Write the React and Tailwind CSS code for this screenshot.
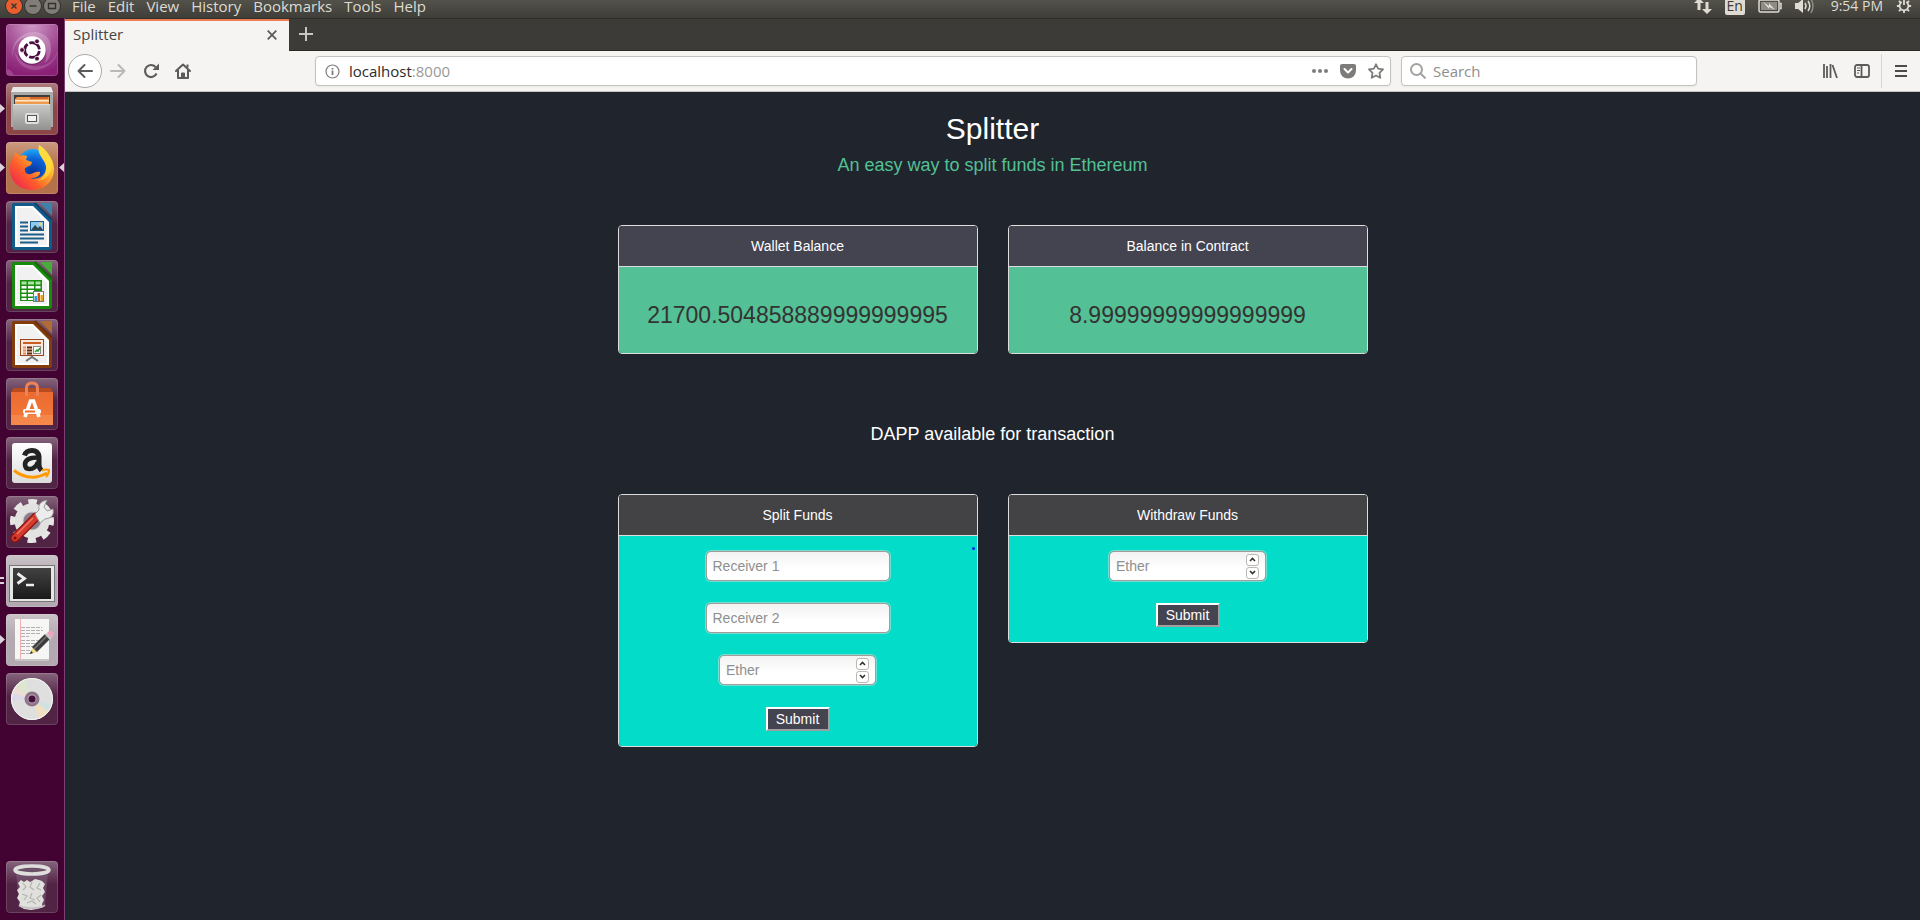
import React from "react";

const TILE_STYLES = {
  dash: "bg-[#8f2579]",
  files: "bg-[#8d4647]",
  firefox: "bg-[#b5714a]",
  dark: "bg-[#512344]",
  grey: "bg-[#b3a9b0]",
};

function DashIcon() {
  return (
    <>
      <defs>
        <radialGradient id="dashGlow" cx="50%" cy="0%" r="100%">
          <stop offset="0" stopColor="#cf9ac6" />
          <stop offset="0.6" stopColor="#a04790" />
          <stop offset="1" stopColor="#8a1f76" />
        </radialGradient>
      </defs>
      <rect x="1" y="1" width="50" height="50" rx="3" fill="url(#dashGlow)" />
      <path d="M7 34C4 20 14 8 28 8c10 0 17 6 17 16 0 6-2 12-6 15 4-12 1-24-12-26C15 11 6 20 7 34z" fill="#fff" opacity=".22" />
      <path d="M1 46C3 44 5 46 8 51H1zM51 30C46 44 30 50 18 43 12 39 9 33 9 28c4 10 14 16 25 14 8-1 14-6 17-14z" fill="#fff" opacity=".16" />
      <circle cx="26" cy="27" r="14" fill="#3b0f33" opacity=".35" />
      <circle cx="26" cy="26" r="13.7" fill="#fff" />
      <circle cx="26" cy="26" r="7.4" fill="none" stroke="#4a0d3f" strokeWidth="2.8" strokeDasharray="13.5 2" strokeDashoffset="-1" />
      <g fill="#4a0d3f" stroke="#fff" strokeWidth=".8">
        <circle cx="16" cy="26" r="2.4" />
        <circle cx="31" cy="17.3" r="2.4" />
        <circle cx="31" cy="34.7" r="2.4" />
      </g>
    </>
  );
}

function FilesIcon() {
  return (
    <>
      <defs>
        <linearGradient id="cabinet" x1="0" y1="0" x2="0" y2="1">
          <stop offset="0" stopColor="#c9c9c7" />
          <stop offset="1" stopColor="#929290" />
        </linearGradient>
      </defs>
      <path d="M5 9l2-5h38l2 5v35H5z" fill="#a9a9a7" />
      <path d="M5 9l2-5h38l2 5z" fill="#e9e9e7" />
      <rect x="8" y="12" width="36" height="12" fill="#3d3d3b" />
      <path d="M9 21v-5l2-2h32v8z" fill="#ef9a4c" />
      <path d="M24 14h18v2H24z" fill="#d6642d" />
      <path d="M9 17h34v1.5H9z" fill="#fbe7cd" />
      <path d="M7 21h37l1 26H7z" fill="url(#cabinet)" />
      <path d="M7 21h37v1H7z" fill="#ddd" />
      <rect x="19" y="30" width="14" height="11" rx="2" fill="#dededc" />
      <rect x="21.5" y="32.5" width="9" height="6" fill="#f2f2f2" stroke="#555" />
    </>
  );
}

function FirefoxIcon() {
  return (
    <>
      <defs>
        <linearGradient id="foxBody" x1="1" y1="0" x2="0" y2="1">
          <stop offset="0" stopColor="#fff250" />
          <stop offset="0.35" stopColor="#ffb62b" />
          <stop offset="0.65" stopColor="#ff5b2b" />
          <stop offset="1" stopColor="#e8155f" />
        </linearGradient>
        <radialGradient id="foxGlobe" cx="50%" cy="80%" r="80%">
          <stop offset="0" stopColor="#0a2f95" />
          <stop offset="0.6" stopColor="#0b63d8" />
          <stop offset="1" stopColor="#21a8f5" />
        </radialGradient>
      </defs>
      <circle cx="27" cy="22" r="15" fill="url(#foxGlobe)" />
      <path
        d="M33 3c5 3 8 7 9 10 4 3 6 9 6 14 0 12-9 21-22 21S4 39 4 27c0-5 1-9 4-12l1-5 5 4c2-1 5-1 7 0l-1 4 6 2-1 3-6 3c-1 4 2 7 6 6 3-1 5-3 9-2 1 4-6 7-11 6 9 3 18-2 17-12-1-7-9-10-7-21z"
        fill="url(#foxBody)"
      />
      <path d="M33 3c-3 9 6 14 7 21 1 8-4 13-9 15 9-1 15-8 15-16 0-10-7-16-13-20z" fill="#ffe03f" opacity=".75" />
    </>
  );
}

function OfficePage({ edge, corner, fold, children }) {
  return (
    <>
      <path d="M7 2h22l17 17v27q0 3-3 3H9q-3 0-3-3V3z" fill={edge} />
      <path d="M34 2h12v13z" fill={corner} />
      <path d="M9 5h18l16 16v25H9z" fill="#fff" />
      <path d="M11 7h15l15 16v21H11z" fill="#f1f1f1" />
      <path d="M29 2l17 17" stroke={fold} strokeWidth="2" />
      {children}
    </>
  );
}

function WriterIcon() {
  return (
    <OfficePage edge="#105a8c" corner="#3d82ab" fold="#0b466f">
      <path d="M14 21.5h8M14 25.5h8M14 29.5h8M14 33.5h24M14 37.5h24M14 41.5h18" stroke="#1d5d89" strokeWidth="2" />
      <rect x="24.5" y="20.5" width="13" height="9" fill="#8ccaf0" stroke="#1d5d89" />
      <path d="M25 29l4-5 3 3 2-2 3 4z" fill="#30464f" />
      <circle cx="34.5" cy="23" r="1.5" fill="#ffd65a" />
    </OfficePage>
  );
}

function CalcIcon() {
  return (
    <OfficePage edge="#188a0c" corner="#46ad3b" fold="#126b09">
      <rect x="14" y="20" width="22" height="21" fill="#1b8d10" />
      <path d="M15.5 21.5h5v3h-5zm6.5 0h6v3h-6zm7.5 0h5v3h-5z" fill="#a8e59f" />
      <path d="M15.5 26h5v2.5h-5zm6.5 0h6v2.5h-6zm7.5 0h5v2.5h-5zM15.5 30h5v2.5h-5zm6.5 0h6v2.5h-6zM15.5 34h5v2.5h-5zm6.5 0h6v2.5h-6zM15.5 38h5v2h-5zm6.5 0h6v2h-6z" fill="#fff" />
      <rect x="27.5" y="31.5" width="10" height="10" fill="#fff" stroke="#777" />
      <path d="M28.5 36h2.5v5h-2.5z" fill="#299ed8" />
      <path d="M31.5 33H34v8h-2.5z" fill="#cf5a18" />
      <path d="M34.5 35H37v6h-2.5z" fill="#e8a21c" />
    </OfficePage>
  );
}

function ImpressIcon() {
  return (
    <OfficePage edge="#853c0d" corner="#b06b37" fold="#6e3009">
      <rect x="14.5" y="20.5" width="23" height="16" fill="#fae8dc" stroke="#93471b" />
      <path d="M17 24h18" stroke="#c95f24" strokeWidth="2" />
      <path d="M17 28.5h3M17 31.5h3M17 34.5h3" stroke="#e88a58" strokeWidth="2" />
      <path d="M21 28.5h5M21 31.5h5M21 34.5h5" stroke="#5d270a" strokeWidth="2" />
      <rect x="27.5" y="27.5" width="7" height="7" fill="#fff" stroke="#888" />
      <path d="M29 33l2-2 1 1 2-3" stroke="#25a02a" strokeWidth="1.5" fill="none" />
      <path d="M26 37v2m-6 3l6-4 6 4" stroke="#777" strokeWidth="2" fill="none" />
    </OfficePage>
  );
}

function SoftwareIcon() {
  return (
    <>
      <defs>
        <linearGradient id="bag" x1="0" y1="0" x2="0" y2="1">
          <stop offset="0" stopColor="#ec6a30" />
          <stop offset="1" stopColor="#f27b3a" />
        </linearGradient>
      </defs>
      <path d="M7 10h38l2 5H5z" fill="#b64c20" />
      <path d="M5 14h42v33H5z" fill="url(#bag)" />
      <path d="M5 37h42v10H5z" fill="#f9955c" opacity=".5" />
      <path d="M20.500 18v-8q0-5 5.500-5t5.500 5v8" fill="none" stroke="#ee8257" strokeWidth="3" />
      <path d="M19 39l5.5-16h3L33 39" fill="none" stroke="#fff" strokeWidth="3.6" />
      <rect x="17" y="31" width="18" height="5" rx="2" fill="#fff" />
      <path d="M19 33.500h10" stroke="#ee6a2c" strokeWidth="2" />
    </>
  );
}

function AmazonIcon() {
  return (
    <>
      <defs>
        <linearGradient id="amz" x1="0" y1="0" x2="0" y2="1">
          <stop offset="0" stopColor="#fff" />
          <stop offset="1" stopColor="#dcdcdc" />
        </linearGradient>
      </defs>
      <rect x="6" y="6" width="40" height="40" rx="3" fill="url(#amz)" />
      <path d="M18.500 18.500q1.500-5 7.500-5t7 6v8.500q0 3 2.500 5.500" fill="none" stroke="#222" strokeWidth="5" />
      <path d="M32 20.500q-13 0-13 7 0 4.500 4.500 4.500 6 0 8.500-7" fill="none" stroke="#222" strokeWidth="4.600" />
      <path d="M8 33.500q16 12 33 2.500" fill="none" stroke="#f90" strokeWidth="3" />
      <path d="M36 33.500q4-1.500 7-.500 0 4-3 7" fill="none" stroke="#f90" strokeWidth="2" />
    </>
  );
}

function SettingsIcon() {
  return (
    <>
      <circle cx="26" cy="25" r="18" fill="none" stroke="#e6e6e4" strokeWidth="8" strokeDasharray="8 6.137" strokeDashoffset="4" />
      <circle cx="26" cy="25" r="13" fill="none" stroke="#e2e2e0" strokeWidth="9" />
      <circle cx="26" cy="25" r="9" fill="#8d7c89" stroke="#c7c7c5" />
      <path d="M9 42L30 21" stroke="#8e160f" strokeWidth="9" strokeLinecap="round" />
      <path d="M9 42L30 21" stroke="#d63a2c" strokeWidth="6.5" strokeLinecap="round" />
      <path d="M11 38L27 22" stroke="#f07a6c" strokeWidth="1.2" />
      <path d="M29 18l4-4q-2-8 8-10l-3 7 3 4 6-2q2 9-8 10l-5 4z" fill="#ececec" stroke="#999" />
      <circle cx="9" cy="42" r="1.5" fill="#7b0f0a" />
    </>
  );
}

function TerminalIcon() {
  return (
    <>
      <defs>
        <linearGradient id="term" x1="0" y1="0" x2="0" y2="1">
          <stop offset="0" stopColor="#424242" />
          <stop offset="1" stopColor="#1a1a1a" />
        </linearGradient>
      </defs>
      <rect x="3.5" y="10.5" width="45" height="36" fill="#e5e5e3" stroke="#777" />
      <rect x="7" y="13" width="38" height="31" fill="url(#term)" />
      <path d="M11.500 18.500l7 5-7 5" fill="none" stroke="#eee" strokeWidth="2.8" />
      <path d="M20 30h8" stroke="#eee" strokeWidth="2.400" />
    </>
  );
}

function EditorIcon() {
  return (
    <>
      <path d="M9 6h34v41H9z" fill="#c7c6c4" />
      <path d="M9 5h34v40H9z" fill="#f6f6f4" />
      <path d="M14.500 5v40" stroke="#f3b0b0" />
      <path d="M15 13.500h21M15 16.500h22M15 19.500h20M15 22.500h8M15 26.500h21M15 29.500h15M15 32.500h17M15 36.500h14M15 39.500h10" stroke="#b0b0b0" strokeDasharray="4 1" />
      <path d="M24 40l3-7 5 5z" fill="#f0d98a" />
      <path d="M24 40l1-3 2 2z" fill="#222" />
      <path d="M26 33l13-13 5 5-13 13z" fill="#3c3c3c" />
      <path d="M28 35l12-12" stroke="#777" strokeWidth="1.5" />
      <path d="M39 21l2-2 5 5-2 2z" fill="#c8c8c8" />
      <path d="M41 19l2-2q2-1 4 1t0 4l-1 2z" fill="#f0a4c3" />
    </>
  );
}

function DiscIcon() {
  return (
    <>
      <circle cx="26" cy="26" r="21" fill="#dfdfdf" />
      <path d="M26 26L10 13q4-5 9-7z" fill="#dce6d0" />
      <path d="M26 26L6 20q1-4 4-7z" fill="#eeddd4" />
      <path d="M26 26l20 6q-1 4-4 7z" fill="#cfe2e0" />
      <path d="M26 26l16 13q-4 5-9 7z" fill="#f0dfc0" />
      <path d="M26 26L5 28q0-5 1-8z" fill="#dcd9ea" />
      <circle cx="26" cy="26" r="20.5" fill="none" stroke="#f5f5f5" />
      <circle cx="26" cy="26" r="6" fill="#b9a3b5" stroke="#8f748a" strokeWidth="3" />
      <circle cx="26" cy="26" r="3.5" fill="#42123a" />
    </>
  );
}

function TrashIcon() {
  return (
    <>
      <path d="M10 11l3 33q1 4 13 4t13-4l3-33z" fill="#7d6078" opacity=".55" />
      <path
        d="M12 22l3-3 3 2 3-2 3 2 2-1 3-2 4 1 3 1 3 3-2 4 2 4-3 4 2 4-2 4 1 3-6 2-6 1-7-1-5-3 1-4-3-4 2-4-2-4 3-3z"
        fill="#e0e0dd"
      />
      <path d="M17 22l3 4-3 3M26 21l-2 5 4 3M34 22l-3 5 4 2M16 33l5 2-3 4M26 32l-2 5 5 2M35 34l-4 3 3 4M21 42l5-2 4 3" fill="none" stroke="#b4b4b0" strokeWidth="1.2" />
      <path d="M13 44q2 3 13 3t13-3" fill="none" stroke="#c5bcc3" strokeWidth="1.500" />
      <ellipse cx="26" cy="9" rx="17" ry="4" fill="#6b5066" stroke="#dededc" strokeWidth="3.5" />
    </>
  );
}

const LAUNCHER = [
  { name: "Search your computer", tile: "dash", Icon: DashIcon },
  { name: "Files", tile: "files", Icon: FilesIcon, running: 1 },
  { name: "Firefox", tile: "firefox", Icon: FirefoxIcon, running: 1, focused: true },
  { name: "LibreOffice Writer", tile: "dark", Icon: WriterIcon },
  { name: "LibreOffice Calc", tile: "dark", Icon: CalcIcon },
  { name: "LibreOffice Impress", tile: "dark", Icon: ImpressIcon },
  { name: "Ubuntu Software", tile: "dark", Icon: SoftwareIcon },
  { name: "Amazon", tile: "dark", Icon: AmazonIcon },
  { name: "System Settings", tile: "dark", Icon: SettingsIcon },
  { name: "Terminal", tile: "grey", Icon: TerminalIcon, running: 2 },
  { name: "Text Editor", tile: "grey", Icon: EditorIcon, running: 1 },
  { name: "Disc", tile: "dark", Icon: DiscIcon },
];

function LauncherTile({ name, tile, Icon, running, focused }) {
  return (
    <button type="button" aria-label={name} className="relative flex w-full justify-center">
      {running === 1 && (
        <svg className="absolute top-[21px] left-0 h-[9px] w-[5px]" viewBox="0 0 5 9">
          <path d="M0 0l5 4.5L0 9z" fill="#dcd3da" />
        </svg>
      )}
      {running === 2 && (
        <svg className="absolute top-[21px] left-0 h-[9px] w-[5px]" viewBox="0 0 5 9">
          <path d="M0 1h4v2H0zM0 6h4v2H0z" fill="#dcd3da" />
        </svg>
      )}
      {focused && (
        <svg className="absolute top-[21px] right-0 h-[9px] w-[5px]" viewBox="0 0 5 9">
          <path d="M5 0L0 4.5 5 9z" fill="#dcd3da" />
        </svg>
      )}
      <span className={"block size-[52px] overflow-hidden rounded-sm bg-linear-to-b from-white/30 to-transparent to-45% shadow-[inset_0_0_0_1px_rgba(255,255,255,0.15)] " + TILE_STYLES[tile]}>
        <svg className="size-[52px]" viewBox="0 0 52 52">
          <Icon />
        </svg>
      </span>
    </button>
  );
}

function Launcher() {
  return (
    <nav aria-label="Launcher" className="flex w-[65px] shrink-0 flex-col justify-between border-r border-[#7b4272] bg-[#420333] pt-[6px] pb-[7px]">
      <div className="flex flex-col gap-[7px]">
        {LAUNCHER.map((item) => (
          <LauncherTile key={item.name} {...item} />
        ))}
      </div>
      <LauncherTile name="Trash" tile="dark" Icon={TrashIcon} />
    </nav>
  );
}

function WindowButton({ label, className, children }) {
  return (
    <button type="button" aria-label={label} className={"flex size-4 items-center justify-center rounded-full shadow-[0_0_0_1px_#33322e] " + className}>
      <svg className="size-4" viewBox="0 0 16 16" fill="none" stroke="#33322e" strokeWidth="1.4">
        {children}
      </svg>
    </button>
  );
}

function MenuBar() {
  return (
    <header className="flex h-[18px] shrink-0 items-start justify-between bg-linear-to-b from-[#53524a] to-[#3e3d38] pr-2 pl-[6px]">
      <div className="flex h-3 items-center gap-3">
        <div className="flex gap-[3px]">
          <WindowButton label="Close" className="bg-[#e95e2e]">
            <path d="M5.5 5.5l5 5m0-5l-5 5" />
          </WindowButton>
          <WindowButton label="Minimize" className="bg-[#7f7d76]">
            <path d="M4.5 8h7" />
          </WindowButton>
          <WindowButton label="Restore" className="bg-[#7f7d76]">
            <path d="M4.5 5.5h7v5h-7z" />
          </WindowButton>
        </div>
        <div className="flex gap-3 text-[15px] leading-3 text-[#dfdbd2]">
          {["File", "Edit", "View", "History", "Bookmarks", "Tools", "Help"].map((m) => (
            <button key={m} type="button">{m}</button>
          ))}
        </div>
      </div>
      <div className="flex h-3 items-center gap-[13px] text-[14px] leading-3 text-[#dfdbd2]">
        <svg className="h-5 w-[18px]" viewBox="0 0 18 20" fill="#dfdbd2">
          <path d="M0 7l5-5 5 5H6.5v7h-3V7zM8 13l5 5 5-5h-3.500V6h-3v7z" />
        </svg>
        <span className="flex h-[18px] w-5 items-center justify-center rounded-xs bg-[#dfdbd2] text-[14px] text-[#3c3b37]">En</span>
        <svg className="h-[14px] w-6" viewBox="0 0 24 14" fill="none" stroke="#dfdbd2" strokeWidth="1.5">
          <rect x="1" y="1" width="20" height="12" rx="1.5" />
          <path d="M22 4.5h1v5h-1" />
          <path d="M3 3h16v8H3z" fill="#8d8b84" stroke="none" />
          <path d="M5 3l6 4V4l6 7-6-3v2z" fill="#dfdbd2" stroke="none" />
        </svg>
        <svg className="h-4 w-5" viewBox="0 0 20 16" fill="none" stroke="#dfdbd2" strokeWidth="1.5">
          <path d="M0 5h3l5-4v14l-5-4H0z" fill="#dfdbd2" stroke="none" />
          <path d="M10 5q2 3 0 6M13 3q3.5 5 0 10" />
          <path d="M16 1q4 7 0 14" stroke="#8d8b84" />
        </svg>
        <span className="ml-[3px]">9:54 PM</span>
        <svg className="size-4" viewBox="0 0 18 18" fill="none" stroke="#dfdbd2">
          <path d="M6.5 4.5a5 5 0 1 0 5 0" strokeWidth="2" />
          <path d="M9 1v7" strokeWidth="2" />
          <path d="M1 9h2.5m11 0H17M3.3 14.7l2-2m7.4 0l2 2M9 14.5V17M3.3 3.3l2 2m7.4 0l2-2" strokeWidth="2" />
        </svg>
      </div>
    </header>
  );
}

function TabStrip() {
  return (
    <div className="flex h-[33px] shrink-0 bg-[#3c3b37] pt-px shadow-[inset_0_-1px_0_#2a2926,inset_0_1px_0_#2f2e2b]">
      <div className="flex w-56 items-center justify-between border-t-2 border-[#ef7d52] bg-[#f5f4f2] pr-3 pb-[3px] pl-2 text-[15px] text-[#45443f]">
        <span>Splitter</span>
        <button type="button" aria-label="Close tab">
          <svg className="size-[10px]" viewBox="0 0 10 10" fill="none" stroke="#5c5b58" strokeWidth="1.8">
            <path d="M.7.7l8.6 8.6m0-8.6L.7 9.3" />
          </svg>
        </button>
      </div>
      <button type="button" aria-label="New tab" className="ml-[10px] pb-[2px]">
        <svg className="size-[14px]" viewBox="0 0 14 14" stroke="#c8c7c3" strokeWidth="2">
          <path d="M7 0v14M0 7h14" />
        </svg>
      </button>
    </div>
  );
}

function NavBar() {
  return (
    <div className="flex h-[41px] shrink-0 items-center border-b border-[#c4c3c0] bg-[#f5f4f2] pr-[11px] pl-[3px] text-[15px]">
      <div className="flex w-[247px] items-center">
        <button type="button" aria-label="Back" className="flex size-[34px] items-center justify-center rounded-full border border-[#a9a8a5] bg-white">
          <svg className="size-4" viewBox="0 0 16 16" fill="none" stroke="#5c5b59" strokeWidth="2" strokeLinecap="round" strokeLinejoin="round">
            <path d="M15 8H1.5M7.5 2l-6 6 6 6" />
          </svg>
        </button>
        <button type="button" aria-label="Forward" className="ml-2">
          <svg className="size-4" viewBox="0 0 16 16" fill="none" stroke="#b9b8b6" strokeWidth="2" strokeLinecap="round" strokeLinejoin="round">
            <path d="M1 8h13.5M8.5 2l6 6-6 6" />
          </svg>
        </button>
        <button type="button" aria-label="Reload" className="ml-[17px]">
          <svg className="size-4" viewBox="0 0 16 16" fill="none" stroke="#5c5b59" strokeWidth="2.2">
            <path d="M13.5 10.5A6 6 0 1 1 12.5 4" />
            <path d="M16 .5V7H9.5z" fill="#5c5b59" stroke="none" />
          </svg>
        </button>
        <button type="button" aria-label="Home" className="ml-4">
          <svg className="size-4" viewBox="0 0 16 16" fill="none" stroke="#5c5b59" strokeWidth="2" strokeLinejoin="round">
            <path d="M1 8l7-6.5L15 8" strokeLinecap="round" />
            <path d="M3 7v8h10V7" />
            <path d="M6.5 15v-5h3v5z" fill="#5c5b59" strokeWidth="1" />
            <path d="M12.5 1.5v3" />
          </svg>
        </button>
      </div>
      <div className="flex h-[30px] min-w-0 flex-1 items-center rounded-sm border border-[#c3c2bf] bg-white pr-[6px] pl-[9px] shadow-xs">
        <svg className="size-[15px] shrink-0" viewBox="0 0 15 15" fill="none" stroke="#7d7c7a">
          <circle cx="7.5" cy="7.5" r="6.5" strokeWidth="1.2" />
          <path d="M7.5 6.5V11M7.5 4v1.6" strokeWidth="1.8" />
        </svg>
        <a href="#top" className="ml-[9px] text-[#9a9997]">
          <span className="text-[#2b2b2b]">localhost</span>:8000
        </a>
        <div className="ml-auto flex items-center gap-3">
          <button type="button" aria-label="Page actions">
            <svg className="h-4 w-4" viewBox="0 0 16 16" fill="#7d7c7a">
              <circle cx="2" cy="8" r="2" />
              <circle cx="8" cy="8" r="2" />
              <circle cx="14" cy="8" r="2" />
            </svg>
          </button>
          <button type="button" aria-label="Save to Pocket">
            <svg className="size-4" viewBox="0 0 16 16">
              <path d="M2 1h12q2 0 2 2v4.5a8 8 0 0 1-16 0V3q0-2 2-2z" fill="#7d7c7a" />
              <path d="M4.5 6L8 9.5 11.5 6" fill="none" stroke="#fff" strokeWidth="2" strokeLinecap="round" strokeLinejoin="round" />
            </svg>
          </button>
          <button type="button" aria-label="Bookmark this page">
            <svg className="size-4" viewBox="0 0 16 16" fill="none" stroke="#7d7c7a" strokeWidth="1.8" strokeLinejoin="round">
              <path d="M8 1.3l2.100 4.400 4.900.7-3.500 3.500.8 4.900L8 12.500l-4.300 2.300.8-4.900L1 6.400l4.900-.7z" />
            </svg>
          </button>
        </div>
      </div>
      <label className="ml-[10px] flex h-[30px] w-[296px] items-center gap-[7px] rounded-sm border border-[#c3c2bf] bg-white px-2 shadow-xs">
        <svg className="size-4 shrink-0" viewBox="0 0 16 16" fill="none" stroke="#a3a2a0" strokeWidth="2">
          <circle cx="6.5" cy="6.5" r="5.5" />
          <path d="M10.5 10.5L15.5 15.5" />
        </svg>
        <input type="search" aria-label="Search" placeholder="Search" className="min-w-0 flex-1 bg-transparent outline-none placeholder:text-[#8f8e8c]" />
      </label>
      <div className="ml-[125px] flex items-center">
        <button type="button" aria-label="Library">
          <svg className="size-4" viewBox="0 0 16 16" stroke="#5c5b59" strokeWidth="1.8">
            <path d="M2 1v14M5 3v12M8.500 1v14M10.500 2l4.500 13" />
          </svg>
        </button>
        <button type="button" aria-label="Sidebar" className="ml-4">
          <svg className="size-4" viewBox="0 0 16 16" fill="none" stroke="#5c5b59" strokeWidth="1.8">
            <rect x="1" y="2" width="14" height="12" rx="2" />
            <path d="M7.5 2v12" />
            <path d="M3 5h3M3 7.5h3M3 10h2" strokeWidth="1" />
          </svg>
        </button>
        <span className="ml-[11px] h-[34px] w-px bg-[#d7d6d3]" />
        <button type="button" aria-label="Menu" className="ml-[11px]">
          <svg className="size-4" viewBox="0 0 16 16" stroke="#4c4b49" strokeWidth="2">
            <path d="M2 3h12M2 8h12M2 13h12" />
          </svg>
        </button>
      </div>
    </div>
  );
}

function Panel({ title, headClass, bodyClass, children }) {
  return (
    <section className="overflow-hidden rounded-sm border border-[#dddddd]">
      <h3 className={"border-b border-[#dddddd] py-[10px] text-center text-[14px] leading-5 text-white " + headClass}>{title}</h3>
      <div className={"p-[15px] " + bodyClass}>{children}</div>
    </section>
  );
}

function Balance({ title, value }) {
  return (
    <Panel title={title} headClass="bg-[#444350]" bodyClass="bg-[#53c095]">
      <p className="mt-5 mb-[10px] text-center text-[23px] leading-[26px] text-[#333333]">{value}</p>
    </Panel>
  );
}

const FIELD =
  "h-[30px] rounded-[5px] border border-[#a39d98] bg-linear-to-b from-[#f2f2f2] to-white to-60% px-[6px] text-[14px] text-[#333333] shadow-[0_0_0_1px_rgba(190,225,220,0.6)] outline-none placeholder:text-[#8f8f8f]";

function TextField({ label }) {
  return <input type="text" aria-label={label} placeholder={label} className={"w-[184px] " + FIELD} />;
}

function StepButton({ label, d }) {
  return (
    <button type="button" aria-label={label} className="flex h-3 w-[13px] items-center justify-center rounded-[3px] border border-[#bcb8b4] bg-white">
      <svg className="h-[5px] w-[7px]" viewBox="0 0 7 5" fill="none" stroke="#33322e" strokeWidth="1.6">
        <path d={d} />
      </svg>
    </button>
  );
}

function EtherField() {
  return (
    <div className="relative w-[157px]">
      <input type="text" inputMode="decimal" aria-label="Ether" placeholder="Ether" className={"w-full " + FIELD} />
      <div className="absolute inset-y-0 right-[7px] flex flex-col justify-center gap-px">
        <StepButton label="Increase" d="M1 4l2.5-2.5L6 4" />
        <StepButton label="Decrease" d="M1 1l2.5 2.5L6 1" />
      </div>
    </div>
  );
}

function Submit() {
  return (
    <button type="submit" className="h-6 w-16 border-2 border-t-white border-r-[#a19fa2] border-b-[#a19fa2] border-l-white bg-[#444350] text-[14px] leading-5 text-white">
      Submit
    </button>
  );
}

function SplitterPage() {
  return (
    <main id="top" className="flex-1 bg-[#20252d] font-['Liberation_Sans',Arial,sans-serif] text-[14px] text-white">
      <div className="mx-auto flex max-w-[750px] flex-col pt-5">
        <h1 className="text-center text-[30px] leading-[33px]">Splitter</h1>
        <p className="mt-[10px] text-center text-[18px] leading-5 text-[#53c095]">An easy way to split funds in Ethereum</p>
        <div className="mt-[50px] grid grid-cols-2 gap-[30px]">
          <Balance title="Wallet Balance" value="21700.504858889999999995" />
          <Balance title="Balance in Contract" value="8.99999999999999999" />
        </div>
        <h2 className="mt-[70px] text-center text-[18px] leading-5">DAPP available for transaction</h2>
        <div className="mt-[50px] grid grid-cols-2 items-start gap-[30px]">
          <Panel title="Split Funds" headClass="bg-[#434244]" bodyClass="relative bg-[#03dcc9]">
            <span className="absolute top-[11px] right-[2px] size-[3px] rounded-full bg-[#0a22f0]" />
            <form onSubmit={(e) => e.preventDefault()} className="flex flex-col items-center gap-[22px]">
              <TextField label="Receiver 1" />
              <TextField label="Receiver 2" />
              <EtherField />
              <Submit />
            </form>
          </Panel>
          <Panel title="Withdraw Funds" headClass="bg-[#434244]" bodyClass="bg-[#03dcc9]">
            <form onSubmit={(e) => e.preventDefault()} className="flex flex-col items-center gap-[22px]">
              <EtherField />
              <Submit />
            </form>
          </Panel>
        </div>
      </div>
    </main>
  );
}

export default function App() {
  return (
    <div className="flex min-h-screen flex-col bg-white font-['Open_Sans','Noto_Sans',sans-serif]">
      <MenuBar />
      <div className="flex flex-1">
        <Launcher />
        <div className="flex min-w-0 flex-1 flex-col">
          <TabStrip />
          <NavBar />
          <SplitterPage />
        </div>
      </div>
    </div>
  );
}
